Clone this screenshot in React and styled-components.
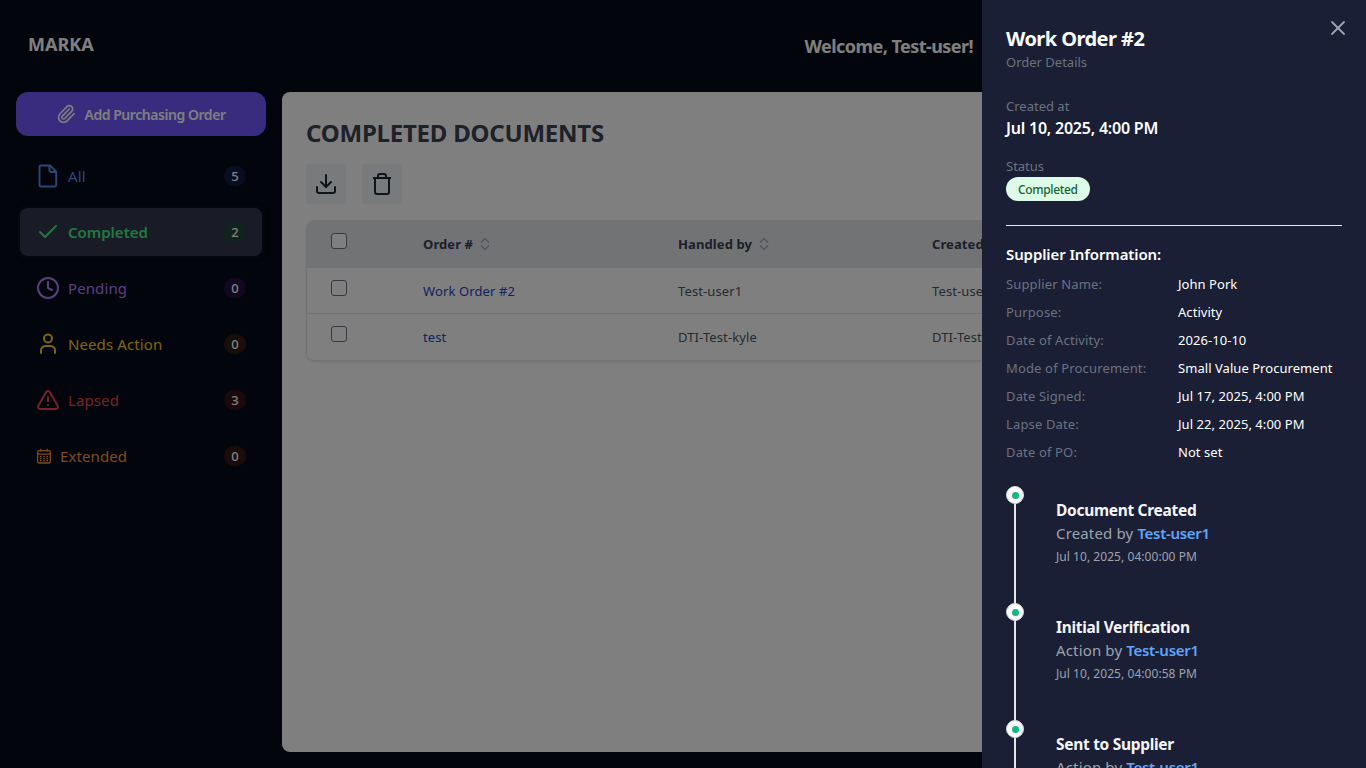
import React from 'react';
import styled, { createGlobalStyle } from 'styled-components';
import { Paperclip, Check, Clock, TriangleAlert, X, Download } from 'lucide-react';

const GlobalStyle = createGlobalStyle`
  html, body {
    margin: 0;
    height: 100%;
    overflow: hidden;
    background: #060a18;
    font-family: "Noto Sans", "Open Sans", Arial, sans-serif;
  }
  * { box-sizing: border-box; }
`;

const Page = styled.div`
  width: 1366px;
  height: 768px;
  overflow: hidden;
  display: flex;
  flex-direction: column;
`;

const Header = styled.header`
  height: 92px;
  flex: none;
  display: flex;
  align-items: center;
  justify-content: space-between;
  padding: 0 393px 0 28px;
`;

const Logo = styled.div`
  font-size: 18px;
  font-weight: 700;
  color: #fff;
  margin-top: -4px;
`;

const Welcome = styled.div`
  font-size: 18px;
  font-weight: 700;
  color: #fff;
  letter-spacing: -0.55px;
`;

const Body = styled.div`
  flex: 1;
  display: flex;
  min-height: 0;
  padding-bottom: 16px;
`;

const Sidebar = styled.aside`
  width: 282px;
  flex: none;
  padding: 0 16px;
`;

const AddButton = styled.button`
  width: 250px;
  height: 44px;
  border: 0;
  border-radius: 12px;
  background: #7258ff;
  color: #fff;
  font: 600 14px "Noto Sans", sans-serif;
  letter-spacing: -0.45px;
  display: flex;
  align-items: center;
  justify-content: center;
  gap: 8px;
`;

const Nav = styled.nav`
  margin: 16px 4px 0;
  display: flex;
  flex-direction: column;
  gap: 8px;
`;

const NavItem = styled.a`
  height: 48px;
  display: flex;
  align-items: center;
  gap: 8px;
  padding: 0 16px;
  border-radius: 8px;
  font-size: 15px;
  font-weight: ${p => (p.$active ? 600 : 400)};
  letter-spacing: ${p => (p.$active ? '0' : '0.1px')};
  color: ${p => p.$color};
  background: ${p => (p.$active ? '#32394c' : 'transparent')};
  box-shadow: ${p => (p.$active ? '0 0 6px rgba(50, 57, 76, 0.35)' : 'none')};
`;

const NavLabel = styled.span`
  flex: 1;
`;

const Count = styled.span`
  min-width: 22px;
  height: 20px;
  border-radius: 10px;
  padding: 0 6px;
  font-size: 13px;
  font-weight: 500;
  line-height: 20px;
  text-align: center;
  color: #fff;
  background: ${p => p.$bg};
`;

const Main = styled.main`
  flex: 1;
  min-width: 0;
  background: #fff;
  border-radius: 8px 0 0 8px;
  padding: 23px 24px 24px;
`;

const Title = styled.h1`
  margin: 0;
  font-size: 24px;
  line-height: 36px;
  font-weight: 700;
  color: #3a4352;
  letter-spacing: -0.22px;
`;

const Toolbar = styled.div`
  display: flex;
  gap: 16px;
  margin-top: 13px;
`;

const ToolButton = styled.button`
  width: 40px;
  height: 40px;
  border: 0;
  border-radius: 4px;
  padding: 0;
  background: #f3f4f6;
  color: #1f2937;
  display: flex;
  align-items: center;
  justify-content: center;
`;

const TableWrap = styled.div`
  margin-top: 16px;
  width: 1036px;
  border: 1px solid #e5e7eb;
  border-radius: 8px;
  box-shadow: 0 1px 2px rgba(0, 0, 0, 0.1);
  overflow: hidden;
`;

const Row = styled.div`
  display: grid;
  grid-template-columns: 116px 255px 254px 1fr;
  height: ${p => (p.$head ? '47px' : '46px')};
  background: ${p => (p.$head ? '#e5e7eb' : '#fff')};
  border-bottom: ${p => (p.$last ? '0' : '1px solid #e5e7eb')};
`;

const CheckCell = styled.div`
  padding: 12px 0 0 24px;
`;

const CheckBox = styled.span`
  display: block;
  width: 16px;
  height: 16px;
  border: 1px solid #6b7280;
  border-radius: 3px;
  background: #fff;
`;

const Cell = styled.div`
  display: flex;
  align-items: center;
  gap: 6px;
  font-size: 13px;
  white-space: nowrap;
  letter-spacing: ${p => (p.$head ? '0.1px' : '0.12px')};
  font-weight: ${p => (p.$head ? 700 : 400)};
  color: ${p => (p.$link ? '#2546c4' : p.$head ? '#374151' : '#4b5563')};
`;

const Overlay = styled.div`
  position: fixed;
  inset: 0;
  background: rgba(0, 0, 0, 0.5);
`;

const Drawer = styled.aside`
  position: fixed;
  top: 0;
  right: 0;
  bottom: 0;
  width: 384px;
  overflow: hidden;
  background: #1a1f35;
  padding: 24px;
  color: #fff;
`;

const CloseButton = styled.button`
  position: absolute;
  top: 16px;
  right: 16px;
  width: 24px;
  height: 24px;
  padding: 0;
  border: 0;
  background: none;
  color: #9ca3af;
`;

const DrawerTitle = styled.h2`
  margin: 0;
  font-size: 20px;
  line-height: 29px;
  font-weight: 700;
  letter-spacing: -0.55px;
`;

const Muted = styled.div`
  font-size: 13px;
  line-height: 18px;
  color: #6b7280;
`;

const Block = styled.div`
  margin-top: ${p => p.$top}px;
`;

const DateText = styled.div`
  margin-top: 2px;
  font-size: 16px;
  line-height: 22px;
  font-weight: 600;
  letter-spacing: -0.22px;
`;

const StatusPill = styled.span`
  display: block;
  width: fit-content;
  margin-top: 2px;
  height: 24px;
  line-height: 25px;
  padding: 0 12px;
  border-radius: 12px;
  background: #dcfce7;
  color: #166534;
  font-size: 12px;
  font-weight: 500;
  letter-spacing: -0.35px;
`;

const Divider = styled.hr`
  margin: 24px 0 0;
  border: 0;
  height: 1px;
  width: 336px;
  background: #e5e7eb;
`;

const SectionTitle = styled.h3`
  margin: 17px 0 5px;
  font-size: 15px;
  line-height: 22px;
  font-weight: 600;
  letter-spacing: -0.1px;
`;

const InfoRow = styled.div`
  height: 28px;
  display: grid;
  grid-template-columns: 172px 1fr;
  align-items: center;
  font-size: 13px;
  white-space: nowrap;
  letter-spacing: 0.05px;
`;

const InfoLabel = styled.span`
  color: #6b7280;
  letter-spacing: 0.15px;
`;

const Timeline = styled.div`
  margin-top: 20px;
  position: relative;
`;

const Step = styled.div`
  height: 117px;
  padding: 13px 0 0 50px;
  position: relative;
  &::before {
    content: '';
    position: absolute;
    left: 8px;
    top: 0;
    bottom: 0;
    width: 2px;
    background: #e5e7eb;
  }
`;

const Dot = styled.span`
  position: absolute;
  left: 0;
  top: 0;
  width: 18px;
  height: 18px;
  border-radius: 50%;
  background: #fff;
  border: 1px solid #d1d5db;
  display: flex;
  align-items: center;
  justify-content: center;
  &::after {
    content: '';
    width: 7px;
    height: 7px;
    border-radius: 50%;
    background: #10b981;
  }
`;

const StepTitle = styled.div`
  font-size: 15.5px;
  line-height: 22px;
  font-weight: 700;
  color: #f3f4f6;
  letter-spacing: -0.3px;
`;

const StepBy = styled.div`
  font-size: 15px;
  line-height: 24px;
  color: #9ca3af;
  letter-spacing: 0.15px;
`;

const StepUser = styled.span`
  color: #60a5fa;
  font-weight: 600;
  letter-spacing: -0.3px;
`;

const StepDate = styled.div`
  font-size: 12px;
  line-height: 18px;
  margin-top: 3px;
  color: #9ca3af;
  letter-spacing: 0.05px;
`;

const DocIcon = () => (
  <svg width="24" height="24" viewBox="0 0 24 24" fill="none" stroke="currentColor" strokeWidth="1.9" strokeLinejoin="round">
    <path d="M5 1.5h9l6.2 6.2V21a1.5 1.5 0 0 1-1.5 1.5H5A1.5 1.5 0 0 1 3.5 21V3A1.5 1.5 0 0 1 5 1.5z" />
    <path d="M13.5 1.5v5a1.5 1.5 0 0 0 1.5 1.5h5" />
  </svg>
);

const PersonIcon = () => (
  <svg width="24" height="24" viewBox="0 0 24 24" fill="none" stroke="currentColor" strokeWidth="2" strokeLinecap="round">
    <circle cx="12" cy="6.5" r="4" />
    <path d="M5 21v-2.5a4.5 4.5 0 0 1 4.5-4.5h5a4.5 4.5 0 0 1 4.5 4.5V21" />
  </svg>
);

const CalendarIcon = () => (
  <svg width="16" height="16" viewBox="0 0 16 16" fill="none" stroke="currentColor" strokeWidth="1.3">
    <rect x="1.6" y="2.6" width="12.8" height="12.4" rx="1.4" />
    <path d="M1.6 6.2h12.8M4.8 0.8v3M11.2 0.8v3" />
    <path d="M4 8.6h1.6M7.2 8.6h1.6M10.4 8.6h1.6M4 10.6h1.6M7.2 10.6h1.6M10.4 10.6h1.6M4 12.6h1.6M7.2 12.6h1.6M10.4 12.6h1.6" strokeWidth="1.1" />
  </svg>
);

const SortIcon = () => (
  <svg width="12" height="16" viewBox="0 0 12 16" fill="none" stroke="#9ca3af" strokeWidth="1.2">
    <path d="M2 6.5l4-4 4 4M2 9.5l4 4 4-4" />
  </svg>
);

const TrashIcon = () => (
  <svg width="24" height="24" viewBox="0 0 24 24" fill="none" stroke="currentColor" strokeWidth="2" strokeLinejoin="round">
    <path d="M3 6h18M8 6V4a2 2 0 0 1 2-2h4a2 2 0 0 1 2 2v2M5 6v14a2 2 0 0 0 2 2h10a2 2 0 0 0 2-2V6" />
  </svg>
);

const navItems = [
  { label: 'All', count: 5, color: '#4f92f0', bg: '#1e3a8a66', icon: <DocIcon /> },
  { label: 'Completed', count: 2, color: '#44ef82', bg: '#14532d80', active: true, icon: <Check size={24} strokeWidth={2} /> },
  { label: 'Pending', count: 0, color: '#b67cfc', bg: '#581c8766', icon: <Clock size={24} strokeWidth={2} /> },
  { label: 'Needs Action', count: 0, color: '#facc15', bg: '#713f1266', icon: <PersonIcon /> },
  { label: 'Lapsed', count: 3, color: '#ef4444', bg: '#7f1d1d66', icon: <TriangleAlert size={24} strokeWidth={2} /> },
  { label: 'Extended', count: 0, color: '#fb923c', bg: '#7c2d1266', icon: <CalendarIcon /> },
];

const rows = [
  { order: 'Work Order #2', handled: 'Test-user1', created: 'Test-user1' },
  { order: 'test', handled: 'DTI-Test-kyle', created: 'DTI-Test-kyle' },
];

const supplier = [
  ['Supplier Name:', 'John Pork'],
  ['Purpose:', 'Activity'],
  ['Date of Activity:', '2026-10-10'],
  ['Mode of Procurement:', 'Small Value Procurement'],
  ['Date Signed:', 'Jul 17, 2025, 4:00 PM'],
  ['Lapse Date:', 'Jul 22, 2025, 4:00 PM'],
  ['Date of PO:', 'Not set'],
];

const steps = [
  { title: 'Document Created', verb: 'Created by', date: 'Jul 10, 2025, 04:00:00 PM' },
  { title: 'Initial Verification', verb: 'Action by', date: 'Jul 10, 2025, 04:00:58 PM' },
  { title: 'Sent to Supplier', verb: 'Action by', date: 'Jul 10, 2025, 04:01:20 PM' },
];

export default function App() {
  return (
    <>
      <GlobalStyle />
      <Page>
        <Header>
          <Logo>MARKA</Logo>
          <Welcome>Welcome, Test-user!</Welcome>
        </Header>
        <Body>
          <Sidebar>
            <AddButton>
              <Paperclip size={20} strokeWidth={2} />
              Add Purchasing Order
            </AddButton>
            <Nav>
              {navItems.map(item => (
                <NavItem key={item.label} $color={item.color} $active={item.active}>
                  {item.icon}
                  <NavLabel>{item.label}</NavLabel>
                  <Count $bg={item.bg}>{item.count}</Count>
                </NavItem>
              ))}
            </Nav>
          </Sidebar>
          <Main>
            <Title>COMPLETED DOCUMENTS</Title>
            <Toolbar>
              <ToolButton><Download size={24} strokeWidth={2} /></ToolButton>
              <ToolButton><TrashIcon /></ToolButton>
            </Toolbar>
            <TableWrap>
              <Row $head>
                <CheckCell><CheckBox /></CheckCell>
                <Cell $head>Order # <SortIcon /></Cell>
                <Cell $head>Handled by <SortIcon /></Cell>
                <Cell $head>Created by <SortIcon /></Cell>
              </Row>
              {rows.map((row, i) => (
                <Row key={row.order} $last={i === rows.length - 1}>
                  <CheckCell><CheckBox /></CheckCell>
                  <Cell $link>{row.order}</Cell>
                  <Cell>{row.handled}</Cell>
                  <Cell>{row.created}</Cell>
                </Row>
              ))}
            </TableWrap>
          </Main>
        </Body>
      </Page>
      <Overlay />
      <Drawer>
        <CloseButton><X size={24} strokeWidth={1.8} /></CloseButton>
        <DrawerTitle>Work Order #2</DrawerTitle>
        <Muted>Order Details</Muted>
        <Block $top={26}>
          <Muted>Created at</Muted>
          <DateText>Jul 10, 2025, 4:00 PM</DateText>
        </Block>
        <Block $top={18}>
          <Muted>Status</Muted>
          <StatusPill>Completed</StatusPill>
        </Block>
        <Divider />
        <SectionTitle>Supplier Information:</SectionTitle>
        {supplier.map(([label, value]) => (
          <InfoRow key={label}>
            <InfoLabel>{label}</InfoLabel>
            <span>{value}</span>
          </InfoRow>
        ))}
        <Timeline>
          {steps.map(step => (
            <Step key={step.title}>
              <Dot />
              <StepTitle>{step.title}</StepTitle>
              <StepBy>{step.verb} <StepUser>Test-user1</StepUser></StepBy>
              <StepDate>{step.date}</StepDate>
            </Step>
          ))}
        </Timeline>
      </Drawer>
    </>
  );
}
